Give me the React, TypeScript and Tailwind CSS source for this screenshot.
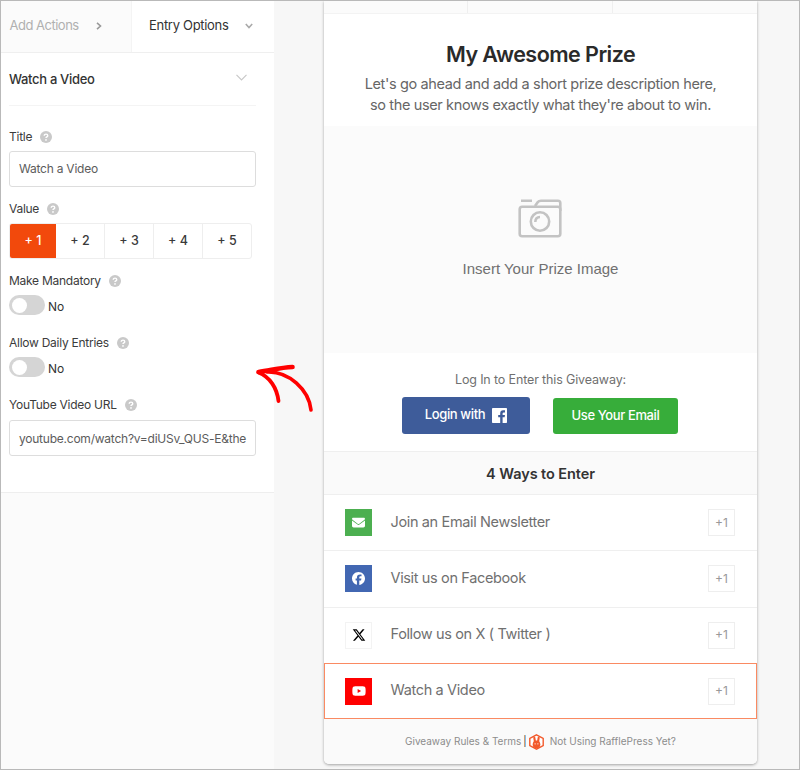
import type { ReactNode } from "react"
import { FaEnvelope, FaFacebook, FaYoutube, FaXTwitter } from "react-icons/fa6"

type Entry = {
  label: string
  icon: ReactNode
  iconClass: string
  rowClass: string
}

const entries: Entry[] = [
  {
    label: "Join an Email Newsletter",
    icon: <FaEnvelope className="w-[13px] h-[13px]" />,
    iconClass: "bg-[#4caf50] text-white",
    rowClass: "h-[56px] border-b border-[#efefef]",
  },
  {
    label: "Visit us on Facebook",
    icon: <FaFacebook className="w-[13px] h-[13px]" />,
    iconClass: "bg-[#4267b2] text-white",
    rowClass: "h-[57px] pb-px border-b border-[#efefef]",
  },
  {
    label: "Follow us on X ( Twitter )",
    icon: <FaXTwitter className="w-[14px] h-[14px]" />,
    iconClass: "bg-white text-black border border-[#f3f3f3]",
    rowClass: "h-[55px] pb-px",
  },
  {
    label: "Watch a Video",
    icon: <FaYoutube className="w-[14px] h-[14px]" />,
    iconClass: "bg-[#ff0000] text-white",
    rowClass: "h-[56px] outline outline-1 -outline-offset-1 outline-[#fa8a62]",
  },
]

const values = ["+ 1", "+ 2", "+ 3", "+ 4", "+ 5"]

function Label({ text }: { text: string }) {
  return (
    <div className="flex items-center h-5 gap-2 text-[12px] tracking-[-0.26px] text-[#3c3c3c]">
      <span>{text}</span>
      <svg className="w-3 h-3" viewBox="0 0 11 11">
        <circle cx="5.5" cy="5.5" r="5.5" fill="#c9c9c9" />
        <path d="M3.9 4.4C3.9 2.4 7.1 2.4 7.1 4.4C7.1 5.5 5.5 5.4 5.5 6.5" fill="none" stroke="#fff" strokeWidth="1.3" />
        <circle cx="5.5" cy="8.2" r="0.8" fill="#fff" />
      </svg>
    </div>
  )
}

function Toggle() {
  return (
    <div className="flex h-5 gap-[3px]">
      <div className="w-9 h-5 p-[2.5px] rounded-full bg-[#d5d5d5]">
        <div className="w-[15px] h-[15px] rounded-full bg-white" />
      </div>
      <span className="pt-[3px] text-[12px] leading-[18px] text-[#333]">No</span>
    </div>
  )
}

function Sidebar() {
  return (
    <aside className="w-[273px] shrink-0 bg-[#fbfbfb]">
      <div className="h-[492px] bg-white border-b border-[#eee]">
        <div className="flex h-[52px] border-b border-[#efefef] text-[13px]">
          <div className="flex items-center w-[131px] pb-px pl-[8.5px] gap-[17px] bg-[#fbfbfb] border-r border-[#f4f4f4] tracking-[-0.5px] text-[#b0b0b0]">
            <span>Add Actions</span>
            <svg className="w-[6px] h-2" viewBox="0 0 6 8" fill="none" stroke="#999" strokeWidth="1.6">
              <path d="M1 0.8L4.5 4L1 7.2" />
            </svg>
          </div>
          <div className="flex items-center pb-px pl-[17px] gap-4 tracking-[-0.3px] text-[#333]">
            <span>Entry Options</span>
            <svg className="w-2 h-[6px]" viewBox="0 0 8 6" fill="none" stroke="#aaa" strokeWidth="1.6">
              <path d="M0.8 1L4 4.5L7.2 1" />
            </svg>
          </div>
        </div>

        <div className="pl-2 w-[255px]">
          <div className="flex items-center justify-between h-[53px] pt-px pr-[9px] border-b border-[#f4f4f4] text-[13px] tracking-[-0.32px] font-medium text-[#333]">
            <span>Watch a Video</span>
            <svg className="w-[11px] h-[7px] -mt-1" viewBox="0 0 11 7" fill="none" stroke="#c8c8c8" strokeWidth="1.2">
              <path d="M0.5 0.8L5.5 5.8L10.5 0.8" />
            </svg>
          </div>

          <div className="pt-[21px]">
            <Label text="Title" />
            <div className="flex items-center h-9 mt-1 px-[9px] border border-[#ddd] rounded-[3px] text-[12px] tracking-[-0.23px] text-[#5c5c5c]">
              Watch a Video
            </div>
          </div>

          <div className="pt-3">
            <Label text="Value" />
            <div className="flex w-[243px] h-9 mt-1 rounded-[3px] border border-[#eee] text-[12.5px] font-medium text-[#3a3a3a] overflow-hidden">
              {values.map((value, i) => (
                <div
                  key={value}
                  className={
                    i === 0
                      ? "flex items-center justify-center w-[46px] shrink-0 -my-px bg-[#f2490c] text-white"
                      : "flex items-center justify-center w-[49px] shrink-0 border-r border-[#eee] last:border-r-0 last:shrink"
                  }
                >
                  {value}
                </div>
              ))}
            </div>
          </div>

          <div className="pt-3">
            <Label text="Make Mandatory" />
            <div className="pt-1">
              <Toggle />
            </div>
          </div>

          <div className="pt-[18px]">
            <Label text="Allow Daily Entries" />
            <div className="pt-1">
              <Toggle />
            </div>
          </div>

          <div className="pt-[18px]">
            <Label text="YouTube Video URL" />
            <div className="flex items-center h-9 mt-[5px] pt-px px-[9px] border border-[#ddd] rounded-[3px] text-[12px] tracking-[-0.23px] text-[#5c5c5c] whitespace-nowrap overflow-hidden">
              youtube.com/watch?v=diUSv_QUS-E&amp;the
            </div>
          </div>
        </div>
      </div>
    </aside>
  )
}

function Giveaway() {
  return (
    <main className="w-[433px] h-[763px] ml-[50px] shrink-0 bg-white rounded-b-[5px] shadow-[0_1px_3px_rgba(0,0,0,0.35)] overflow-hidden">
      <div className="flex h-[13px] bg-[#fbfbfb] border-b border-[#f3f3f3]">
        <div className="w-36 border-r border-[#efefef]" />
        <div className="w-[145px] border-r border-[#efefef]" />
      </div>

      <div className="h-28 pt-[25px] text-center">
        <h1 className="text-[21.5px] leading-[30px] tracking-[-0.54px] font-semibold text-[#2a2a2a]">My Awesome Prize</h1>
        <p className="mt-[5px] text-[14.5px] leading-[20.5px] tracking-[-0.36px] text-[#666]">
          Let's go ahead and add a short prize description here,
          <br />
          so the user knows exactly what they're about to win.
        </p>
      </div>

      <div className="flex flex-col items-center h-[227px] pt-[73px] bg-[#fbfbfb]">
        <svg className="w-11 h-[39px] mr-[2px]" viewBox="0 0 44 39" fill="none" stroke="#c3c3c3" strokeWidth="2.6">
          <rect x="1.7" y="7.7" width="40.6" height="29.6" rx="2.5" />
          <path d="M3 1.7H14" />
          <path d="M17 7L19.5 3.4Q20.8 1.7 23 1.7H40Q42.3 1.7 42.3 4V12" />
          <circle cx="22" cy="22.5" r="9.2" />
          <path d="M17.3 23Q17.5 18 22 18" />
        </svg>
        <span className="mt-[21px] font-['Liberation_Sans',sans-serif] text-[15px] leading-5 text-[#707070]">
          Insert Your Prize Image
        </span>
      </div>

      <div className="h-[98px] pt-[18px] text-center">
        <div className="text-[12.5px] leading-[18px] tracking-[-0.14px] text-[#707070]">Log In to Enter this Giveaway:</div>
        <div className="flex pl-[78px] pt-2 gap-[23px] text-[13px] tracking-[-0.38px] font-medium text-white">
          <button className="flex items-center justify-center w-32 h-[37px] gap-[7px] rounded-[3px] bg-[#3e5c9a]">
            <span className="-mt-[2px]">Login with</span>
            <svg className="w-[15px] h-[15px]" viewBox="0 0 15 15">
              <rect width="15" height="15" rx="0.8" fill="#fff" />
              <path
                d="M8.2 15V9.3H6.2V7.1H8.2V5.4Q8.2 2.3 11.2 2.3H13V4.5H11.8Q10.6 4.5 10.6 5.6V7.1H13L12.6 9.3H10.6V15Z"
                fill="#3e5c9a"
              />
            </svg>
          </button>
          <button className="w-[125px] h-9 mt-px rounded-[3px] bg-[#37ad3a]">Use Your Email</button>
        </div>
      </div>

      <div className="flex items-center justify-center h-[44px] pt-px bg-[#fafafa] border-y border-[#efefef] text-[14.5px] tracking-[-0.08px] font-semibold text-[#333]">
        4 Ways to Enter
      </div>

      {entries.map((entry) => (
        <div key={entry.label} className={`flex items-center pl-[21px] pr-[22px] ${entry.rowClass}`}>
          <div className={`flex items-center justify-center w-[27px] h-[27px] ${entry.iconClass}`}>{entry.icon}</div>
          <span className="ml-[18.5px] -mt-[2px] text-[14.5px] tracking-[-0.36px] text-[#707070]">{entry.label}</span>
          <span className="flex items-center justify-center w-[27px] h-[27px] ml-auto border border-[#eee] text-[12px] text-[#999]">
            +1
          </span>
        </div>
      ))}

      <div className="flex items-center justify-center h-[45px] bg-[#fafafa] text-[10px] text-[#8c8c8c]">
        <span>Giveaway Rules &amp; Terms</span>
        <span className="ml-[2px] text-[#333]">|</span>
        <svg className="w-[15px] h-4 ml-[2px]" viewBox="0 0 15 16">
          <path d="M7.5 0.8L14.2 4.4V11.6L7.5 15.2L0.8 11.6V4.4Z" fill="#fff" stroke="#f2592b" strokeWidth="1.4" />
          <path d="M5.3 3.7L6 8M9.7 3.7L9 8" stroke="#f2592b" strokeWidth="2.1" strokeLinecap="round" />
          <ellipse cx="7.5" cy="10.4" rx="3.8" ry="3.8" fill="#f2592b" />
          <circle cx="6.1" cy="9.8" r="0.6" fill="#fff" />
          <circle cx="8.9" cy="9.8" r="0.6" fill="#fff" />
        </svg>
        <span className="ml-[6px]">Not Using RafflePress Yet?</span>
      </div>
    </main>
  )
}

export default function App() {
  return (
    <div className="relative flex w-[800px] h-[770px] border border-[#b9b9b9] bg-[#f7f7f7] overflow-hidden font-[Inter,sans-serif]">
      <Sidebar />
      <Giveaway />
      {/* hand-drawn arrow pointing at the settings */}
      <svg
        className="absolute left-[254px] top-[362px] w-[62px] h-[52px]"
        viewBox="0 0 62 52"
        fill="none"
        stroke="#ff0000"
        strokeLinecap="round"
        strokeLinejoin="round"
      >
        <path d="M3.5 9C14 8 24 4.5 37.5 4" strokeWidth="4.6" />
        <path d="M3.5 9.5C15 14 22 25 23.5 38" strokeWidth="3.8" />
        <path d="M12 9C34 8 54 27 56 47" strokeWidth="3.6" />
      </svg>
    </div>
  )
}
